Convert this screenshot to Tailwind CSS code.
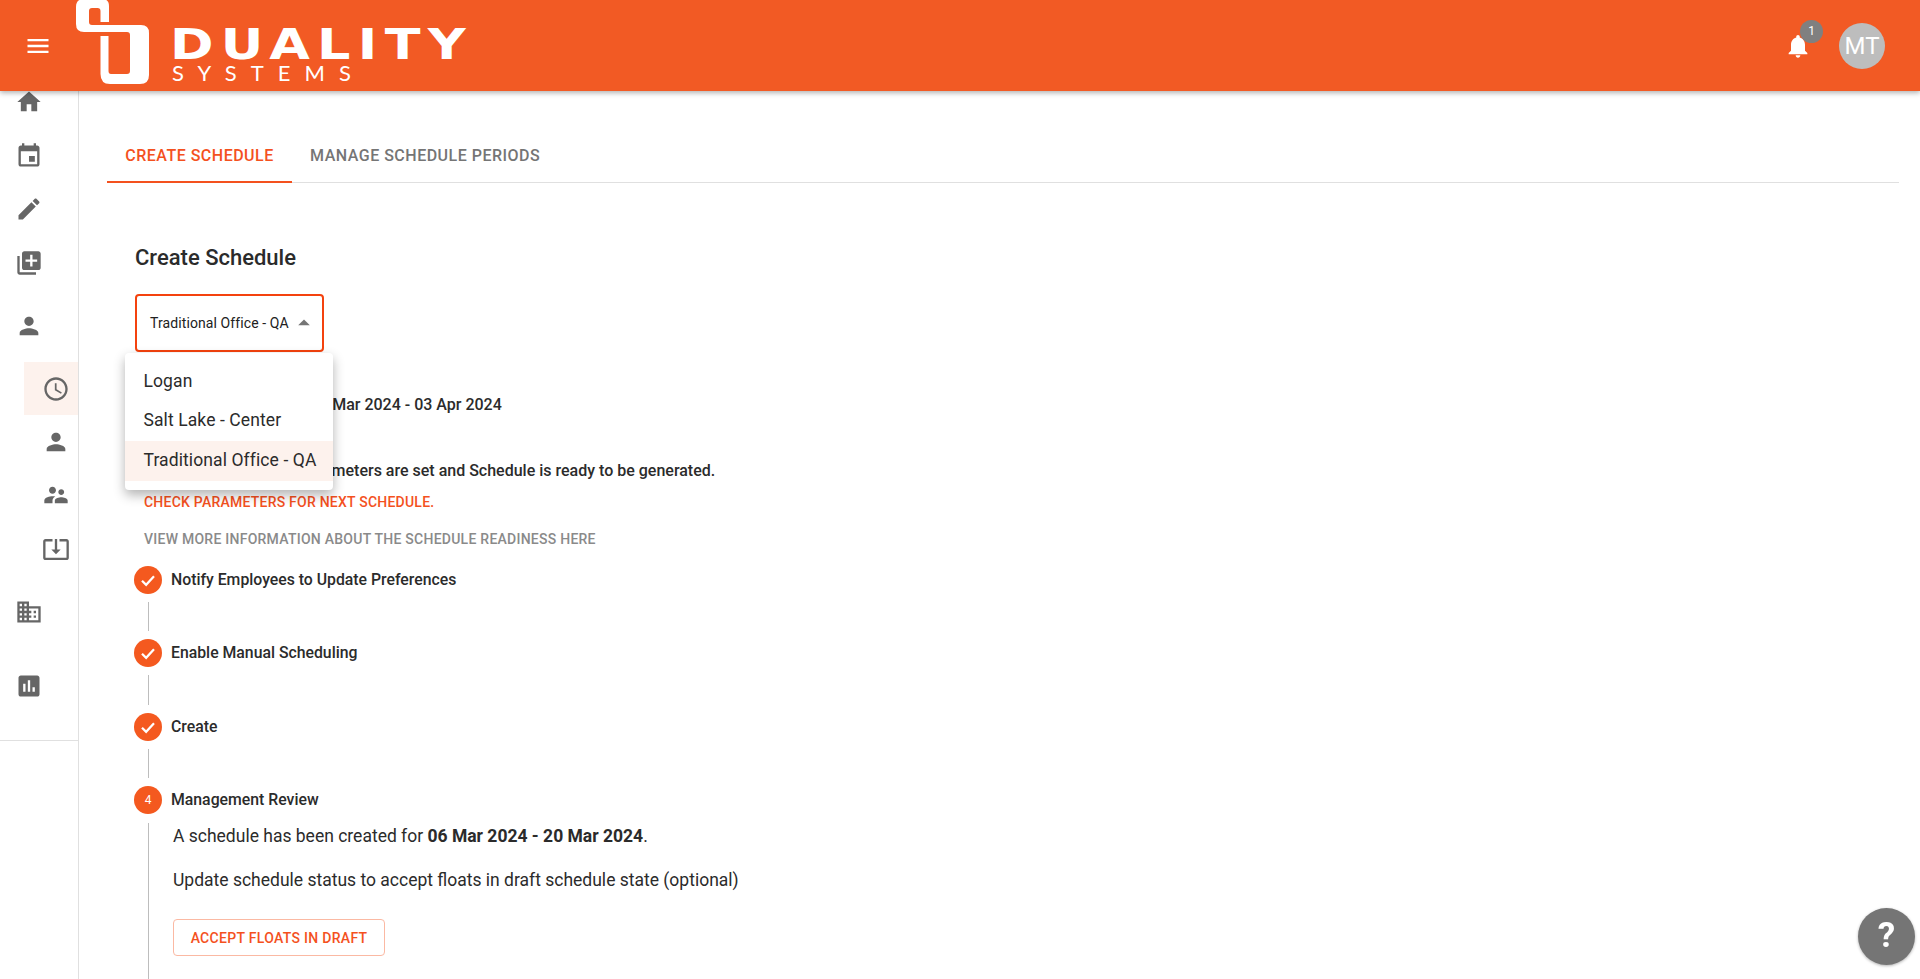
<!DOCTYPE html>
<html lang="en">
<head>
  <meta charset="UTF-8">
  <meta name="viewport" content="width=device-width, initial-scale=1.0">
  <title>Create Schedule</title>
  <script src="https://cdn.jsdelivr.net/npm/@tailwindcss/browser@4"></script>
</head>
<body class="h-[979px] overflow-hidden bg-white font-['Roboto',sans-serif] text-[#212121]">
  <!-- top bar -->
  <header class="relative z-20 flex h-[91px] items-center justify-between bg-[#f25a24] shadow-[0_2px_5px_rgba(0,0,0,0.3)]">
    <div class="flex items-center">
      <svg class="ml-[24px] h-[28px] w-[28px] fill-white" viewBox="0 0 24 24"><path d="M3 18h18v-2H3v2zm0-5h18v-2H3v2zm0-7v2h18V6H3z"/></svg>
      <svg class="ml-[24px] h-[91px] w-[76px] fill-white" viewBox="76 0 76 91"><path fill-rule="evenodd" d="M100.5 22H109V6Q109-1 102-1H84Q76-1 76 7V24Q76 32 84 32H127Q130 32 130 35V71Q130 74 127 74H111Q108.5 74 108.5 71V36H100.5V74Q100.5 84 110 84H140Q149 84 149 75V33Q149 25 141 25H92Q89 25 89 22V11Q89 8 92 8H97.500Q100.5 8 100.5 11Z"/></svg>
      <div class="ml-[20px] pt-[18px] text-white">
        <div class="-ml-[2.500px] h-[36px] origin-left scale-x-[1.22] font-['DejaVu_Sans',sans-serif] text-[43px] leading-[36px] font-bold tracking-[6px]">DUALITY</div>
        <div class="mt-[1px] font-['Lato',sans-serif] text-[22px] leading-[20px] tracking-[14px]">SYSTEMS</div>
      </div>
    </div>
    <div class="flex items-center">
      <div class="relative mr-[27px]">
        <svg class="h-[28px] w-[28px] fill-white" viewBox="0 0 24 24"><path d="M12 22c1.1 0 2-.9 2-2h-4c0 1.1.89 2 2 2zm6-6v-5c0-3.07-1.64-5.64-4.5-6.32V4c0-.83-.67-1.5-1.5-1.5s-1.5.67-1.5 1.5v.68C7.63 5.36 6 7.92 6 11v5l-2 2v1h16v-1l-2-2z"/></svg>
        <span class="absolute left-[16px] top-[-12px] flex h-[23px] w-[23px] items-center justify-center rounded-full bg-[#808080] text-[12px] text-white">1</span>
      </div>
      <div class="mr-[35px] flex h-[46px] w-[46px] items-center justify-center rounded-full bg-[#bdbdbd] text-[24px] text-white">MT</div>
    </div>
  </header>

  <div class="flex h-[888px]">
    <!-- sidebar -->
    <nav class="relative z-10 -mt-[16px] h-[904px] w-[79px] shrink-0 border-r border-[#e0e0e0] fill-[#666666]">
      <div class="flex h-[54px] items-center pl-[15px]"><svg class="h-[28px] w-[28px]" viewBox="0 0 24 24"><path d="M10 20v-6h4v6h5v-8h3L12 3 2 12h3v8z"/></svg></div>
      <div class="flex h-[53px] items-center pl-[15px]"><svg class="h-[28px] w-[28px]" viewBox="0 0 24 24"><path d="M17 12h-5v5h5v-5zM16 1v2H8V1H6v2H5c-1.110 0-1.990.9-1.990 2L3 19c0 1.100.89 2 2 2h14c1.100 0 2-.9 2-2V5c0-1.100-.9-2-2-2h-1V1h-2zm3 18H5V8h14v11z"/></svg></div>
      <div class="flex h-[54px] items-center pl-[15px]"><svg class="h-[28px] w-[28px]" viewBox="0 0 24 24"><path d="M3 17.250V21h3.750L17.810 9.940l-3.750-3.750L3 17.250zM20.710 7.040c.39-.39.39-1.020 0-1.410l-2.340-2.340c-.39-.39-1.020-.39-1.410 0l-1.830 1.830 3.750 3.750 1.830-1.830z"/></svg></div>
      <div class="flex h-[53px] items-center pl-[15px]"><svg class="h-[28px] w-[28px]" viewBox="0 0 24 24"><path d="M4 6H2v14c0 1.100.9 2 2 2h14v-2H4V6zm16-4H8c-1.100 0-2 .9-2 2v12c0 1.100.9 2 2 2h12c1.100 0 2-.9 2-2V4c0-1.100-.9-2-2-2zm-1 9h-4v4h-2v-4H9V9h4V5h2v4h4v2z"/></svg></div>
      <div class="mt-[10px] flex h-[53px] items-center pl-[15px]"><svg class="h-[28px] w-[28px]" viewBox="0 0 24 24"><path d="M12 12c2.210 0 4-1.790 4-4s-1.790-4-4-4-4 1.790-4 4 1.790 4 4 4zm0 2c-2.670 0-8 1.340-8 4v2h16v-2c0-2.660-5.330-4-8-4z"/></svg></div>
      <div class="mt-[10px] ml-[24px] flex h-[53px] items-center bg-[#fdf2ed] pl-[18px]"><svg class="h-[28px] w-[28px]" viewBox="0 0 24 24"><path d="M11.990 2C6.470 2 2 6.480 2 12s4.470 10 9.990 10C17.520 22 22 17.520 22 12S17.520 2 11.990 2zM12 20c-4.420 0-8-3.580-8-8s3.580-8 8-8 8 3.580 8 8-3.580 8-8 8zM12.500 7H11v6l5.250 3.150.75-1.230-4.500-2.670z"/></svg></div>
      <div class="ml-[24px] flex h-[53px] items-center pl-[18px]"><svg class="h-[28px] w-[28px]" viewBox="0 0 24 24"><path d="M12 12c2.210 0 4-1.790 4-4s-1.790-4-4-4-4 1.790-4 4 1.790 4 4 4zm0 2c-2.670 0-8 1.340-8 4v2h16v-2c0-2.660-5.330-4-8-4z"/></svg></div>
      <div class="ml-[24px] flex h-[54px] items-center pl-[18px]"><svg class="h-[28px] w-[28px]" viewBox="0 0 24 24"><path d="M16.500 12c1.380 0 2.490-1.120 2.490-2.500S17.880 7 16.500 7C15.120 7 14 8.120 14 9.500s1.120 2.500 2.500 2.500zM9 11c1.660 0 2.990-1.340 2.990-3S10.660 5 9 5C7.340 5 6 6.340 6 8s1.340 3 3 3zm7.500 3c-1.830 0-5.500.92-5.500 2.750V19h11v-2.250c0-1.830-3.670-2.750-5.500-2.750zM9 13c-2.330 0-7 1.170-7 3.500V19h7v-2.250c0-.85.33-2.340 2.370-3.470C10.500 13.100 9.660 13 9 13z"/></svg></div>
      <div class="ml-[24px] flex h-[53px] items-center pl-[18px]"><svg class="h-[28px] w-[28px]" viewBox="0 0 24 24"><path d="M12 16.500l4-4h-3v-9h-2v9H8l4 4zm9-13h-6v1.990h6v14.030H3V5.490h6V3.500H3c-1.100 0-2 .9-2 2v14c0 1.100.9 2 2 2h18c1.100 0 2-.9 2-2v-14c0-1.100-.9-2-2-2z"/></svg></div>
      <div class="mt-[10px] flex h-[53px] items-center pl-[15px]"><svg class="h-[28px] w-[28px]" viewBox="0 0 24 24"><path d="M12 7V3H2v18h20V7H12zM6 19H4v-2h2v2zm0-4H4v-2h2v2zm0-4H4V9h2v2zm0-4H4V5h2v2zm4 12H8v-2h2v2zm0-4H8v-2h2v2zm0-4H8V9h2v2zm0-4H8V5h2v2zm10 12h-8v-2h2v-2h-2v-2h2v-2h-2V9h8v10zm-2-8h-2v2h2v-2zm0 4h-2v2h2v-2z"/></svg></div>
      <div class="mt-[21px] flex h-[53px] items-center pl-[15px]"><svg class="h-[28px] w-[28px]" viewBox="0 0 24 24"><path d="M19 3H5c-1.100 0-2 .9-2 2v14c0 1.100.9 2 2 2h14c1.100 0 2-.9 2-2V5c0-1.100-.9-2-2-2zM9 17H7v-7h2v7zm4 0h-2V7h2v10zm4 0h-2v-4h2v4z"/></svg></div>
      <div class="mt-[28px] border-t border-[#e0e0e0]"></div>
    </nav>

    <main class="relative min-w-0 flex-1">
      <!-- tabs -->
      <div class="ml-[28px] mr-[21px] mt-[42px] flex h-[50px] items-start border-b border-[#e0e0e0]">
        <div class="-mb-px h-[50px] w-[185px] border-b-2 border-[#f4511e] pt-[12.500px] text-center text-[16px] leading-[20px] font-medium tracking-[0.5px] text-[#f4511e]">CREATE SCHEDULE</div>
        <div class="h-[50px] px-[18px] pt-[12.500px] text-[16px] leading-[20px] font-medium tracking-[0.5px] text-[#757575]">MANAGE SCHEDULE PERIODS</div>
      </div>

      <div class="relative ml-[56px]">
        <h1 class="mt-[60px] text-[22px] leading-[30px] font-medium text-[#2b2b2b]">Create Schedule</h1>
        <!-- location select -->
        <div class="mt-[21px] flex h-[58px] w-[189px] items-center rounded-[4px] border-2 border-[#f4420e] pl-[13px] text-[14px] tracking-[0.1px]">
          <span>Traditional Office - QA</span>
          <svg class="ml-[1px] h-[28px] w-[28px] fill-[#757575]" viewBox="0 0 24 24"><path d="M7 14l5-5 5 5z"/></svg>
        </div>

        <div class="ml-[9px] mt-[43px] text-[16px] leading-[20px] font-medium text-[#2b2b2b]">Next Schedule Period:&nbsp; 20 Mar 2024 - 03 Apr 2024</div>
        <div class="ml-[9px] mt-[46px] text-[16px] leading-[20px] font-medium text-[#2b2b2b]">All required Schedule parameters are set and Schedule is ready to be generated.</div>
        <div class="ml-[9px] mt-[11px] text-[14px] leading-[20px] font-medium tracking-[0.23px] text-[#f4511e]">CHECK PARAMETERS FOR NEXT SCHEDULE.</div>
        <div class="ml-[9px] mt-[17px] text-[14px] leading-[20px] font-medium tracking-[0.25px] text-[#8a8a8a]">VIEW MORE INFORMATION ABOUT THE SCHEDULE READINESS HERE</div>

        <!-- stepper -->
        <div class="-ml-[1px] mt-[16.500px]">
          <div class="flex h-[28px] items-center gap-[9px] text-[15.800px] font-medium text-[#2b2b2b]">
            <span class="flex h-[28px] w-[28px] items-center justify-center rounded-full bg-[#f4591f]"><svg class="h-[18px] w-[18px] fill-none stroke-white stroke-[3]" viewBox="0 0 24 24"><path d="M4 13l5.500 5.500L20 7"/></svg></span>
            Notify Employees to Update Preferences
          </div>
          <div class="my-[8px] ml-[14px] h-[29.500px] w-px bg-[#bdbdbd]"></div>
          <div class="flex h-[28px] items-center gap-[9px] text-[15.800px] font-medium text-[#2b2b2b]">
            <span class="flex h-[28px] w-[28px] items-center justify-center rounded-full bg-[#f4591f]"><svg class="h-[18px] w-[18px] fill-none stroke-white stroke-[3]" viewBox="0 0 24 24"><path d="M4 13l5.500 5.500L20 7"/></svg></span>
            Enable Manual Scheduling
          </div>
          <div class="my-[8px] ml-[14px] h-[29.500px] w-px bg-[#bdbdbd]"></div>
          <div class="flex h-[28px] items-center gap-[9px] text-[15.800px] font-medium text-[#2b2b2b]">
            <span class="flex h-[28px] w-[28px] items-center justify-center rounded-full bg-[#f4591f]"><svg class="h-[18px] w-[18px] fill-none stroke-white stroke-[3]" viewBox="0 0 24 24"><path d="M4 13l5.500 5.500L20 7"/></svg></span>
            Create
          </div>
          <div class="my-[8px] ml-[14px] h-[29.500px] w-px bg-[#bdbdbd]"></div>
          <div class="flex h-[28px] items-center gap-[9px] text-[15.800px] font-medium text-[#2b2b2b]">
            <span class="flex h-[28px] w-[28px] items-center justify-center rounded-full bg-[#f4591f] text-[12px] font-normal text-white">4</span>
            Management Review
          </div>
          <div class="ml-[14px] mt-[9px] h-[200px] border-l border-[#bdbdbd] pl-[24px] text-[17.500px] leading-[24px] text-[#2b2b2b]">
            <p class="pt-[1px]">A schedule has been created for <b class="font-bold">06 Mar 2024 - 20 Mar 2024</b>.</p>
            <p class="mt-[20px]">Update schedule status to accept floats in draft schedule state (optional)</p>
            <div class="mt-[27px] flex h-[37px] w-[212px] items-center justify-center rounded-[4px] border border-[#fbb9a3] text-[14px] font-medium tracking-[0.3px] text-[#f4511e]">ACCEPT FLOATS IN DRAFT</div>
          </div>
        </div>

        <!-- open dropdown list -->
        <ul class="absolute left-[-10px] top-[109.500px] z-10 w-[208px] rounded-[4px] bg-white py-[9px] text-[17.500px] tracking-[0.1px] text-[#2b2b2b] shadow-[0_5px_12px_rgba(0,0,0,0.3)]">
          <li class="flex h-[39px] items-center pl-[18.500px]">Logan</li>
          <li class="flex h-[40px] items-center pl-[18.500px]">Salt Lake - Center</li>
          <li class="flex h-[40px] items-center bg-[#fdf2ed] pl-[18.500px]">Traditional Office - QA</li>
        </ul>
      </div>

      <!-- help button -->
      <div class="fixed bottom-[14px] right-[5px] z-30 flex h-[57px] w-[57px] items-center justify-center rounded-full bg-[#757575] text-[35px] font-bold text-white shadow-[0_1px_3px_rgba(0,0,0,0.3)]">?</div>
    </main>
  </div>
</body>
</html>
